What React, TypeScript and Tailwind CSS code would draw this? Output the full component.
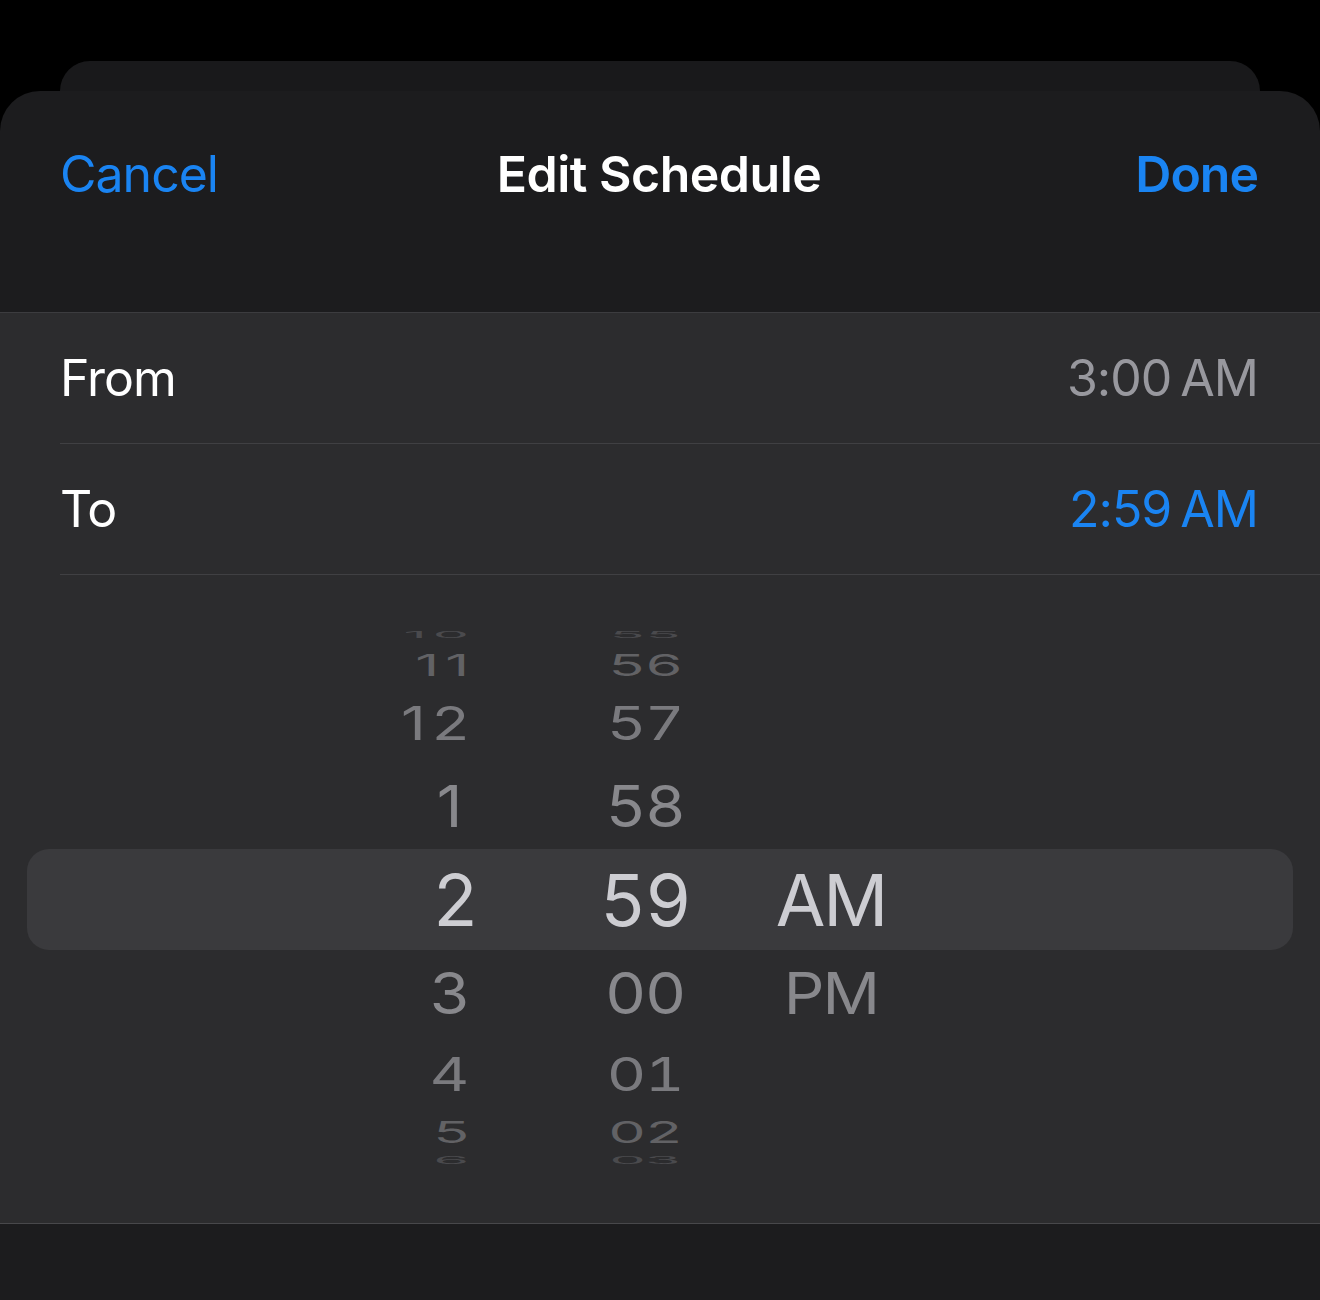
import React from 'react';

type WheelRow = {
  h: number;
  hour?: string;
  minute?: string;
  period?: string;
  sx: number;
  sy: number;
  color: string;
};

const rowsAbove: WheelRow[] = [
  { h: 30, hour: '10', minute: '55', sx: 0.82, sy: 0.12, color: '#4a4a4d' },
  { h: 32, hour: '11', minute: '56', sx: 0.84, sy: 0.42, color: '#626265' },
  { h: 82, hour: '12', minute: '57', sx: 0.87, sy: 0.66, color: '#7a7a7e' },
  { h: 85, hour: '1', minute: '58', sx: 0.9, sy: 0.82, color: '#88888c' },
];

const rowsBelow: WheelRow[] = [
  { h: 86, hour: '3', minute: '00', period: 'PM', sx: 0.91, sy: 0.83, color: '#88888c' },
  { h: 76, hour: '4', minute: '01', sx: 0.87, sy: 0.67, color: '#7a7a7e' },
  { h: 40, hour: '5', minute: '02', sx: 0.84, sy: 0.42, color: '#626265' },
  { h: 18, hour: '6', minute: '03', sx: 0.82, sy: 0.14, color: '#4a4a4d' },
];

const font = { fontFamily: 'Inter, "Noto Sans", sans-serif' };

function Row({ row }: { row: WheelRow }) {
  const t = `scale(${row.sx}, ${row.sy})`;
  const twoDigit = (row.hour ?? '').length > 1;
  return (
    <div className="flex items-center" style={{ height: row.h, color: row.color }}>
      <div
        className={
          'w-[468px] text-right text-[70px] leading-none ' +
          (twoDigit ? 'tracking-[0.1em]' : 'tracking-[-0.02em]') +
          (row.hour === '1' ? ' pr-[7px]' : '')
        }
      >
        <span
          className={'inline-block origin-right' + (twoDigit ? ' -mr-[7px]' : '')}
          style={{ transform: t }}
        >
          {row.hour}
        </span>
      </div>
      <div className="ml-[92px] w-[170px] text-center text-[70px] leading-none tracking-[-0.02em] tabular-nums">
        <span className="inline-block" style={{ transform: t }}>{row.minute}</span>
      </div>
      <div className="ml-[30px] w-[142px] text-center text-[70px] leading-none tracking-[-0.03em]">
        <span className="inline-block" style={{ transform: t }}>{row.period}</span>
      </div>
    </div>
  );
}

function ListRow({ label, time, blue }: { label: string; time: string; blue?: boolean }) {
  return (
    <div className="flex items-center justify-between pr-[62px] h-[130px] text-[50px] tracking-[-0.02em]">
      <span className="text-white">{label}</span>
      <span className={'flex gap-[9px] ' + (blue ? 'text-[#1a84f2]' : 'text-[#98989e]')}>
        <span>{time}</span>
        <span>AM</span>
      </span>
    </div>
  );
}

export default function App() {
  return (
    <div className="w-[1320px] h-[1300px] bg-black flex flex-col overflow-hidden" style={font}>
      <div className="mt-[61px] mx-[60px] h-[30px] rounded-t-[30px] bg-[#19191b]" />

      <div className="flex-1 flex flex-col rounded-t-[40px] bg-[#1c1c1e] overflow-hidden">
        {/* Header */}
        <div className="h-[221px] shrink-0">
          <div className="h-[166px] pl-[60px] pr-[62px] grid grid-cols-[1fr_auto_1fr] items-center text-[50px] tracking-[-0.02em]">
            <span className="text-[#1a84f2] justify-self-start">Cancel</span>
            <span className="text-white font-semibold tracking-[-0.01em]">Edit Schedule</span>
            <span className="text-[#1a84f2] font-semibold justify-self-end">Done</span>
          </div>
        </div>

        {/* Grouped list */}
        <div className="border-t border-[#3c3c3f] bg-[#2c2c2e] flex flex-col">
          <div className="pl-[60px]">
            <ListRow label="From" time="3:00" />
          </div>
          <div className="ml-[60px] h-px bg-[#404043]" />
          <div className="pl-[60px]">
            <ListRow label="To" time="2:59" blue />
          </div>
          <div className="ml-[60px] h-px bg-[#404043]" />

          {/* Time picker */}
          <div className="h-[648px] pt-[45px] flex flex-col">
            {rowsAbove.map((r, i) => (
              <Row key={'a' + i} row={r} />
            ))}
            <div className="mx-[27px] h-[101px] rounded-[22px] bg-[#3a3a3d] flex items-center">
              <div className="-ml-[27px] flex items-center text-[#cdcdd2]">
                <div className="w-[476px] text-right text-[72px] leading-none tracking-[-0.02em]">2</div>
                <div className="ml-[84px] w-[170px] text-center text-[72px] leading-none tracking-[-0.02em] tabular-nums">59</div>
                <div className="ml-[30px] w-[142px] text-center text-[72px] leading-none tracking-[-0.03em]">AM</div>
              </div>
            </div>
            {rowsBelow.map((r, i) => (
              <Row key={'b' + i} row={r} />
            ))}
          </div>
        </div>

        <div className="flex-1 border-t border-[#48484b] bg-[#1c1c1e]" />
      </div>
    </div>
  );
}
